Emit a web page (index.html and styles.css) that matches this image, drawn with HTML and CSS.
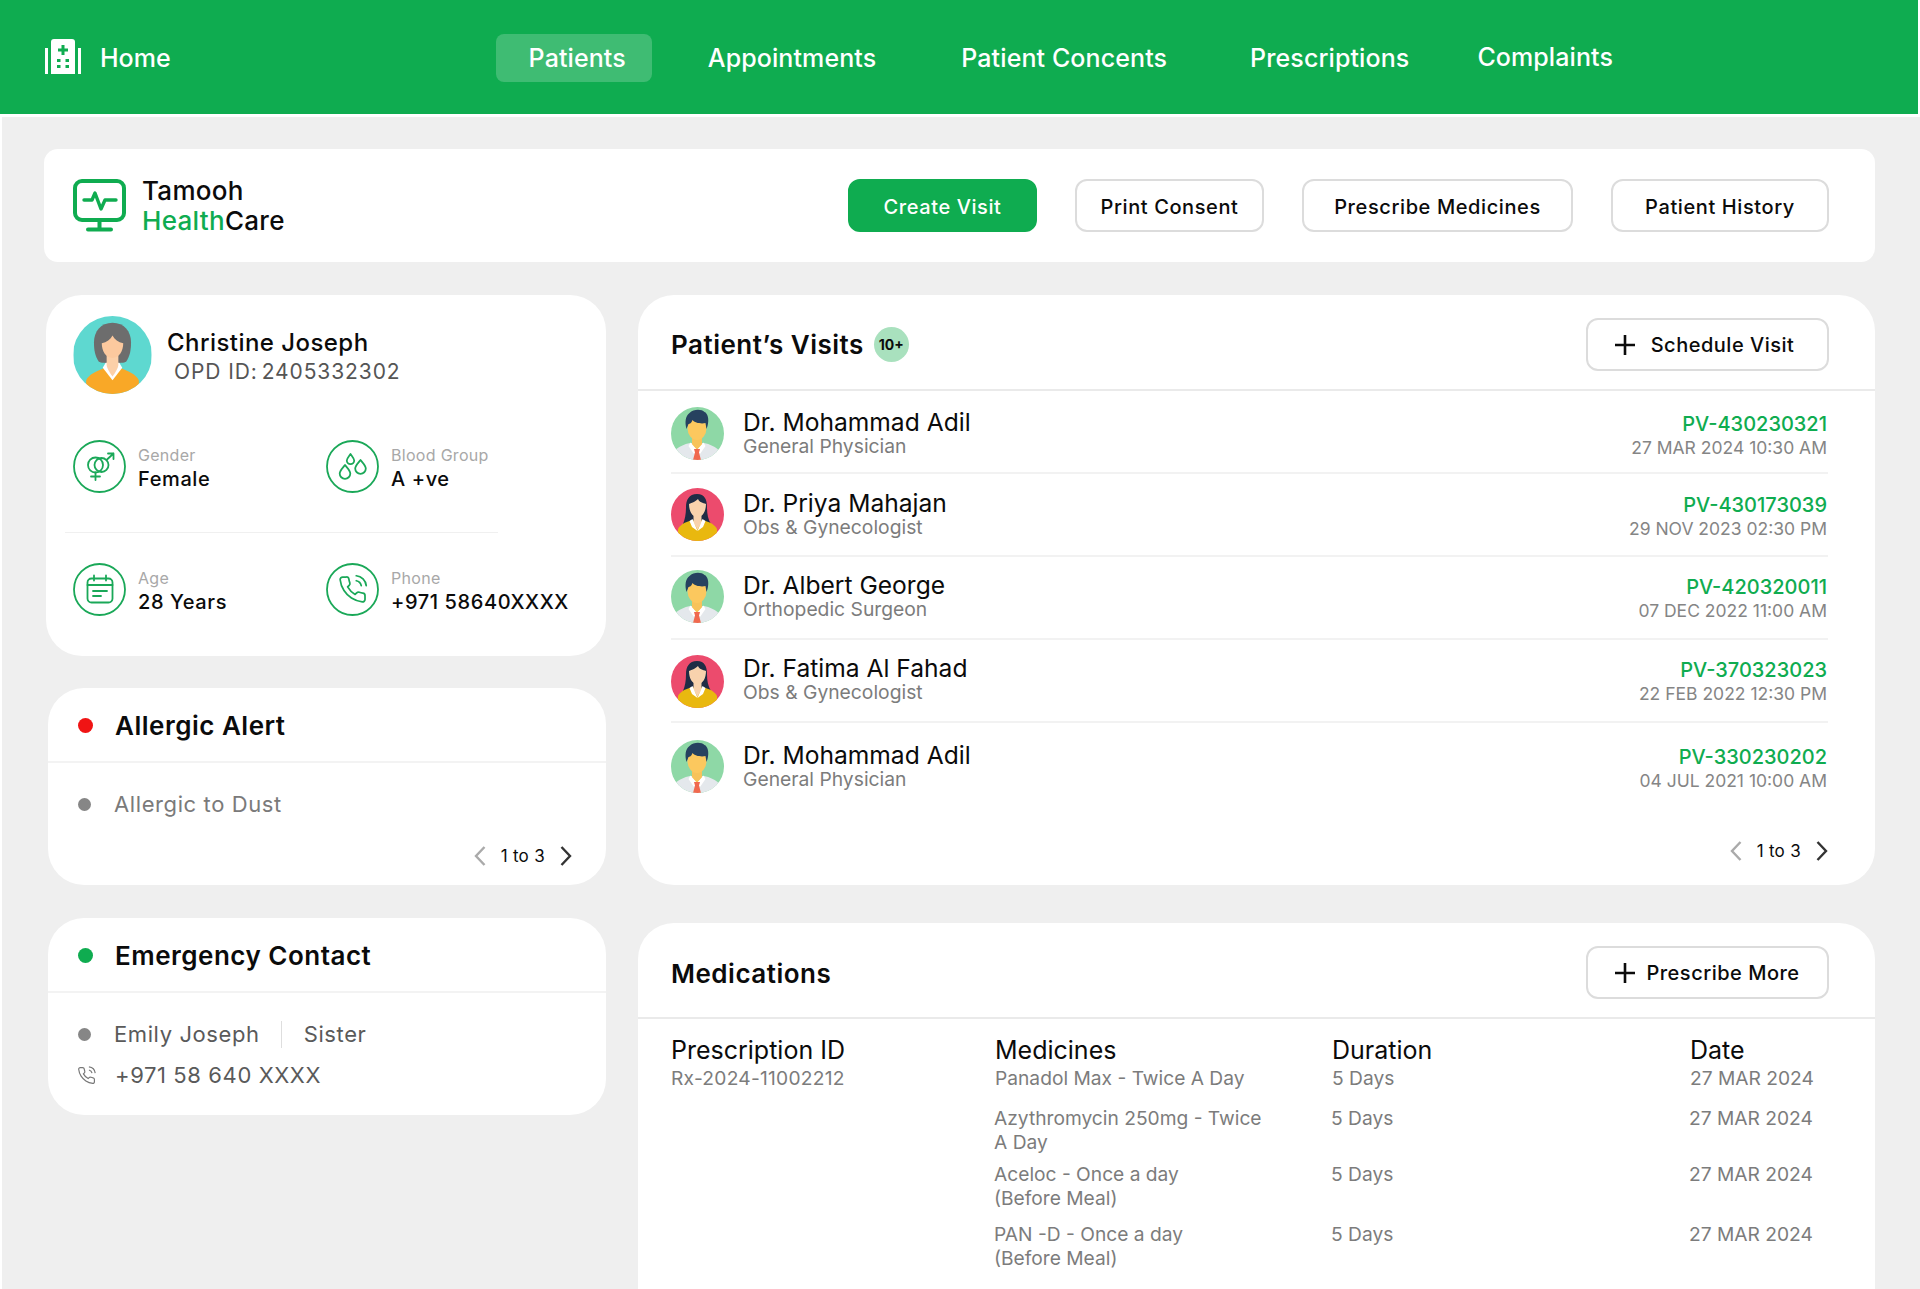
FILE: index.html
```html
<!DOCTYPE html>
<html lang="en">
<head>
    <meta charset="UTF-8">
    <title>Tamooh HealthCare - Patient</title>
    <link rel="stylesheet" href="styles.css">
</head>
<body>
    <!-- Shared avatars and icons -->
    <svg class="sprite" xmlns="http://www.w3.org/2000/svg">
        <symbol id="doctor-male" viewBox="0 0 53 53">
            <rect width="53" height="53" fill="#8ed8a6"/>
            <path d="M4 53v-9c2-4 10-7 15-8h14c5 1 13 4 15 8v9z" fill="#e4e8ec"/>
            <path d="M21 28h10v10l-5 5-5-5z" fill="#f7c35a"/>
            <path d="M19.500 35.500l6.500 7.500-3 4-5.500-8zM32.500 35.500l-6.500 7.500 3 4 5.500-8z" fill="#fff"/>
            <path d="M23 42h6l-1 3.500 2 7.500h-8l2-7.500z" fill="#f0694f"/>
            <ellipse cx="26" cy="21" rx="9.500" ry="12" fill="#fcc85e"/>
            <path d="M15.500 22c-2-7-1-13 3-16 4-4 12-4 15-1 3 1 5 7 3 14l-1 3-1-6c-4 1-11 0-13-3-1 3-3 4-4 4z" fill="#26415f"/>
        </symbol>
        <symbol id="doctor-female" viewBox="0 0 53 53">
            <rect width="53" height="53" fill="#ec4b6d"/>
            <path d="M26 6c-8 0-11 6-11 13 0 7-1 12-3 17h28c-3-5-4-10-4-17 0-7-2-13-10-13z" fill="#1f2c45"/>
            <path d="M7 53v-12c2-4 7-7 13-8.500h13c6 1.500 11 4.500 13 8.500v12z" fill="#e9b80f"/>
            <path d="M22.500 25h8v9l-4 8-4-8z" fill="#f8d2ad"/>
            <path d="M21.500 31l5 12-5.500-4-2.500-6zM31.500 31l-5 12 5.500-4 2.500-6z" fill="#fff"/>
            <path d="M18 16c3-1 7-3 9-5 1 3 5 4 8 5 0 7-3 13-8.500 13S18 23 18 16z" fill="#f8d2ad"/>
        </symbol>
        <symbol id="icon-phone" viewBox="0 0 24 24">
            <path d="M22 16.920v3a2 2 0 0 1-2.180 2 19.790 19.790 0 0 1-8.630-3.070 19.500 19.500 0 0 1-6-6 19.790 19.790 0 0 1-3.070-8.670A2 2 0 0 1 4.110 2h3a2 2 0 0 1 2 1.720 12.840 12.840 0 0 0 .7 2.810 2 2 0 0 1-.45 2.110L8.090 9.910a16 16 0 0 0 6 6l1.270-1.270a2 2 0 0 1 2.110-.45 12.840 12.840 0 0 0 2.810.7A2 2 0 0 1 22 16.920z"/>
            <path d="M15.050 5A5 5 0 0 1 19 8.950M15.050 1A9 9 0 0 1 23 8.940"/>
        </symbol>
        <symbol id="icon-plus" viewBox="0 0 20 20">
            <path d="M10 0v20M0 10h20"/>
        </symbol>
        <symbol id="chevron-left" viewBox="0 0 12 20">
            <path d="M10.500 1L2 10l8.500 9"/>
        </symbol>
        <symbol id="chevron-right" viewBox="0 0 12 20">
            <path d="M1.500 1L10 10l-8.500 9"/>
        </symbol>
    </svg>

    <header class="navbar">
        <a class="brand-home">
            <svg class="home-icon" viewBox="0 0 36 36">
                <path d="M6 3a3 3 0 0 1 3-3h18a3 3 0 0 1 3 3v32H6z" fill="#fff"/>
                <path d="M0 9h3v26H0zM33 9h3v26h-3z" fill="#fff"/>
                <path d="M16.500 6h3v3.500H23v3h-3.500V16h-3v-3.500H13v-3h3.500z" fill="#0fac50"/>
                <path d="M12 20h3.500v3H12zM20.500 20H24v3h-3.500zM12 26h3.500v3H12zM20.500 26H24v3h-3.500z" fill="#0fac50"/>
            </svg>
            <span>Home</span>
        </a>
        <nav class="nav-links">
            <a class="nav-link active">Patients</a>
            <a class="nav-link">Appointments</a>
            <a class="nav-link concents">Patient Concents</a>
            <a class="nav-link">Prescriptions</a>
            <a class="nav-link last">Complaints</a>
        </nav>
    </header>

    <main class="page">
        <section class="top-bar">
            <div class="logo">
                <svg class="logo-icon" viewBox="0 0 53 53">
                    <rect x="2" y="2" width="49" height="39" rx="7" fill="none" stroke="#0fac50" stroke-width="4"/>
                    <path d="M26.500 42v7M15 50.500h23" fill="none" stroke="#0fac50" stroke-width="4" stroke-linecap="round"/>
                    <path d="M11 21h8l3-7 6 16 4-9h11" fill="none" stroke="#0fac50" stroke-width="3.400" stroke-linecap="round" stroke-linejoin="round"/>
                </svg>
                <div class="logo-text">
                    <div>Tamooh</div>
                    <div><span class="green">Health</span>Care</div>
                </div>
            </div>
            <div class="top-actions">
                <button class="btn btn-primary create">Create Visit</button>
                <button class="btn consent">Print Consent</button>
                <button class="btn prescribe">Prescribe Medicines</button>
                <button class="btn history">Patient History</button>
            </div>
        </section>

        <div class="columns">
            <div class="left-col">
                <section class="card patient-card">
                    <div class="patient-head">
                        <svg class="patient-avatar" viewBox="0 0 80 80">
                            <rect width="80" height="80" fill="#5ed8d0"/>
                            <path d="M40 7c-12 0-19 9-19 20 0 8 1 14 5 20 3 2 25 2 28 0 4-6 5-12 5-20C59 16 52 7 40 7z" fill="#6d6d6d"/>
                            <path d="M13 80V66c2-6 12-10 19-13h16c7 3 17 7 19 13v14z" fill="#f9a827"/>
                            <path d="M30 53l10 13 10-13-3-5H33z" fill="#fff"/>
                            <path d="M34 38h12v12c0 3-3 8-6 12-3-4-6-9-6-12z" fill="#fcd0a8"/>
                            <path d="M29 28c5-1 9-4 11-8 2 4 6 7 11 8 0 8-4 15-11 15s-11-7-11-15z" fill="#fcc99e"/>
                        </svg>
                        <div>
                            <div class="patient-name">Christine Joseph</div>
                            <div class="patient-id">OPD ID:<span class="patient-number">2405332302</span></div>
                        </div>
                    </div>
                    <div class="info-row">
                        <div class="info-item">
                            <svg class="info-icon" viewBox="0 0 53 53">
                                <circle cx="26.500" cy="26.500" r="25.500"/>
                                <circle cx="22.500" cy="25" r="7.500"/>
                                <circle cx="28.500" cy="25" r="7"/>
                                <path d="M22.500 32.500V40M18 36.500h9M33.500 20l7-6.500M35 13.500h5.500V19"/>
                            </svg>
                            <div class="info-text">
                                <div class="info-label">Gender</div>
                                <div class="info-value">Female</div>
                            </div>
                        </div>
                        <div class="info-item">
                            <svg class="info-icon" viewBox="0 0 53 53">
                                <circle cx="26.500" cy="26.500" r="25.500"/>
                                <path d="M24.500 14c2 2.800 3.700 4.500 3.700 6.500a3.700 3.700 0 0 1-7.400 0c0-2 1.700-3.700 3.700-6.500z"/>
                                <path d="M19 25c2.800 3.500 5.300 5.700 5.300 8.500a5.300 5.300 0 0 1-10.600 0c0-2.800 2.500-5 5.300-8.500z"/>
                                <path d="M34.500 20c2.800 3.500 5.300 5.700 5.300 8.500a5.300 5.300 0 0 1-10.600 0c0-2.800 2.500-5 5.300-8.500z"/>
                            </svg>
                            <div class="info-text">
                                <div class="info-label">Blood Group</div>
                                <div class="info-value">A +ve</div>
                            </div>
                        </div>
                    </div>
                    <div class="info-divider"></div>
                    <div class="info-row">
                        <div class="info-item">
                            <svg class="info-icon" viewBox="0 0 53 53">
                                <circle cx="26.500" cy="26.500" r="25.500"/>
                                <rect x="14.500" y="15.500" width="25" height="24" rx="4"/>
                                <path d="M14.500 22h25M21 12.500v5M33 12.500v5M20 28h14M20 33h8"/>
                            </svg>
                            <div class="info-text">
                                <div class="info-label">Age</div>
                                <div class="info-value">28 Years</div>
                            </div>
                        </div>
                        <div class="info-item">
                            <svg class="info-icon" viewBox="0 0 53 53">
                                <circle cx="26.500" cy="26.500" r="25.500"/>
                                <use href="#icon-phone" x="11.500" y="11.500" width="30" height="30"/>
                            </svg>
                            <div class="info-text">
                                <div class="info-label">Phone</div>
                                <div class="info-value">+971 58640XXXX</div>
                            </div>
                        </div>
                    </div>
                </section>

                <section class="card side-card allergic-card">
                    <div class="side-head">
                        <span class="status-dot red"></span>
                        <h3>Allergic Alert</h3>
                    </div>
                    <div class="side-body">
                        <div class="side-line">
                            <span class="gray-dot"></span>
                            <span>Allergic to Dust</span>
                        </div>
                        <div class="pager">
                            <svg class="chevron off"><use href="#chevron-left"/></svg>
                            <span>1 to 3</span>
                            <svg class="chevron"><use href="#chevron-right"/></svg>
                        </div>
                    </div>
                </section>

                <section class="card side-card">
                    <div class="side-head">
                        <span class="status-dot green-dot"></span>
                        <h3>Emergency Contact</h3>
                    </div>
                    <div class="side-body">
                        <div class="side-line dark">
                            <span class="gray-dot"></span>
                            <span class="contact-name">Emily Joseph</span>
                            <span>Sister</span>
                        </div>
                        <div class="side-line dark phone-line">
                            <svg class="small-phone"><use href="#icon-phone"/></svg>
                            <span>+971 58 640 XXXX</span>
                        </div>
                    </div>
                </section>
            </div>

            <div class="right-col">
                <section class="card wide-card visits-card">
                    <div class="wide-head">
                        <div class="wide-title">
                            <h2>Patient’s Visits</h2>
                            <span class="count-badge">10+</span>
                        </div>
                        <button class="btn btn-add schedule">
                            <svg class="plus"><use href="#icon-plus"/></svg>
                            Schedule Visit
                        </button>
                    </div>
                    <div class="visit-list">
                        <div class="visit-row">
                            <svg class="doc-avatar"><use href="#doctor-male"/></svg>
                            <div class="doc-text">
                                <div class="doc-name">Dr. Mohammad Adil</div>
                                <div class="doc-role">General Physician</div>
                            </div>
                            <div class="visit-meta">
                                <div class="visit-id">PV-430230321</div>
                                <div class="visit-date">27 MAR 2024 10:30 AM</div>
                            </div>
                        </div>
                        <div class="visit-row">
                            <svg class="doc-avatar"><use href="#doctor-female"/></svg>
                            <div class="doc-text">
                                <div class="doc-name">Dr. Priya Mahajan</div>
                                <div class="doc-role">Obs &amp; Gynecologist</div>
                            </div>
                            <div class="visit-meta">
                                <div class="visit-id">PV-430173039</div>
                                <div class="visit-date">29 NOV 2023 02:30 PM</div>
                            </div>
                        </div>
                        <div class="visit-row">
                            <svg class="doc-avatar"><use href="#doctor-male"/></svg>
                            <div class="doc-text">
                                <div class="doc-name">Dr. Albert George</div>
                                <div class="doc-role">Orthopedic Surgeon</div>
                            </div>
                            <div class="visit-meta">
                                <div class="visit-id">PV-420320011</div>
                                <div class="visit-date">07 DEC 2022 11:00 AM</div>
                            </div>
                        </div>
                        <div class="visit-row">
                            <svg class="doc-avatar"><use href="#doctor-female"/></svg>
                            <div class="doc-text">
                                <div class="doc-name">Dr. Fatima Al Fahad</div>
                                <div class="doc-role">Obs &amp; Gynecologist</div>
                            </div>
                            <div class="visit-meta">
                                <div class="visit-id">PV-370323023</div>
                                <div class="visit-date">22 FEB 2022 12:30 PM</div>
                            </div>
                        </div>
                        <div class="visit-row">
                            <svg class="doc-avatar"><use href="#doctor-male"/></svg>
                            <div class="doc-text">
                                <div class="doc-name">Dr. Mohammad Adil</div>
                                <div class="doc-role">General Physician</div>
                            </div>
                            <div class="visit-meta">
                                <div class="visit-id">PV-330230202</div>
                                <div class="visit-date">04 JUL 2021 10:00 AM</div>
                            </div>
                        </div>
                    </div>
                    <div class="pager visits-pager">
                        <svg class="chevron off"><use href="#chevron-left"/></svg>
                        <span>1 to 3</span>
                        <svg class="chevron"><use href="#chevron-right"/></svg>
                    </div>
                </section>

                <section class="card wide-card meds-card">
                    <div class="wide-head">
                        <div class="wide-title">
                            <h2>Medications</h2>
                        </div>
                        <button class="btn btn-add prescribe-more">
                            <svg class="plus"><use href="#icon-plus"/></svg>
                            Prescribe More
                        </button>
                    </div>
                    <div class="med-table">
                        <div class="med-row med-first">
                            <div>
                                <div class="med-head">Prescription ID</div>
                                <span class="med-id">Rx-2024-11002212</span>
                            </div>
                            <div>
                                <div class="med-head">Medicines</div>
                                Panadol Max - Twice A Day
                            </div>
                            <div>
                                <div class="med-head">Duration</div>
                                5 Days
                            </div>
                            <div>
                                <div class="med-head">Date</div>
                                27 MAR 2024
                            </div>
                        </div>
                        <div class="med-row med-second">
                            <div></div>
                            <div class="med-name">Azythromycin 250mg - Twice A Day</div>
                            <div>5 Days</div>
                            <div>27 MAR 2024</div>
                        </div>
                        <div class="med-row med-third">
                            <div></div>
                            <div class="med-name">Aceloc - Once a day<br>(Before Meal)</div>
                            <div>5 Days</div>
                            <div>27 MAR 2024</div>
                        </div>
                        <div class="med-row med-fourth">
                            <div></div>
                            <div class="med-name">PAN -D - Once a day<br>(Before Meal)</div>
                            <div>5 Days</div>
                            <div>27 MAR 2024</div>
                        </div>
                    </div>
                </section>
            </div>
        </div>
    </main>
</body>
</html>
```
FILE: styles.css
```css
/* General styles */
* {
    box-sizing: border-box;
}

html, body {
    height: 100%;
}

body {
    margin: 0;
    background-color: #fff;
    font-family: Inter, "Liberation Sans", sans-serif;
    color: #0b0b0b;
    overflow: hidden;
    display: flex;
    flex-direction: column;
}

.sprite {
    display: none;
}

h2, h3 {
    margin: 0;
}

/* Top navigation */
.navbar {
    height: 114px;
    flex-shrink: 0;
    background-color: #0fac50;
    color: #fff;
    display: flex;
    align-items: center;
    padding: 2px 0 0 45px;
    margin-right: 2px;
}

.brand-home {
    display: flex;
    align-items: center;
    gap: 19px;
    font-size: 25px;
    font-weight: 500;
}

.home-icon {
    width: 36px;
    height: 36px;
    margin-bottom: 2px;
}

.nav-links {
    display: flex;
    align-items: center;
    margin-left: 325px;
    font-size: 25px;
    font-weight: 500;
    letter-spacing: 0.1px;
}

.nav-link {
    padding: 0 30px;
    height: 48px;
    line-height: 48px;
    margin-right: 25px;
}

.nav-link.active {
    padding: 0 26px 0 33px;
    margin-right: 26px;
    background-color: rgba(255, 255, 255, 0.2);
    border-radius: 8px;
}

.nav-link.concents {
    margin-right: 23px;
}

.nav-link.last {
    margin-left: -17px;
    margin-bottom: 3px;
}

/* Page */
.page {
    flex: 1;
    min-height: 0;
    margin: 3px 0 0 2px;
    padding: 32px 45px 0 42px;
    background-color: #efefef;
    display: flex;
    flex-direction: column;
}

.top-bar {
    height: 113px;
    flex-shrink: 0;
    background-color: #fff;
    border-radius: 14px;
    display: flex;
    align-items: center;
    padding: 0 46px 0 29px;
}

.logo {
    display: flex;
    align-items: center;
    gap: 16px;
}

.logo-icon {
    width: 53px;
    height: 53px;
}

.logo-text {
    font-size: 26px;
    line-height: 30px;
    font-weight: 500;
    letter-spacing: 0.3px;
}

.green {
    color: #0fac50;
}

.top-actions {
    margin-left: auto;
    display: flex;
    gap: 38px;
}

.btn {
    height: 53px;
    border: 2px solid #dcdcdc;
    border-radius: 12px;
    background-color: #fff;
    color: #0b0b0b;
    font-family: inherit;
    font-size: 20px;
    font-weight: 500;
    letter-spacing: 0.6px;
    padding: 2px 0 0;
}

.btn-primary {
    background-color: #0fac50;
    border-color: #0fac50;
    color: #fff;
}

.create { width: 189px; }
.consent { width: 189px; }
.prescribe { width: 271px; }
.history { width: 218px; }

.btn-add {
    width: 243px;
    display: flex;
    align-items: center;
    justify-content: center;
    letter-spacing: 0.5px;
    padding: 0;
}

.plus {
    width: 20px;
    height: 20px;
    fill: none;
    stroke: #0b0b0b;
    stroke-width: 2.600;
}

.schedule {
    padding-right: 6px;
}

.schedule .plus { margin-right: 16px; }
.prescribe-more .plus { margin-right: 11px; }

/* Columns */
.columns {
    flex: 1;
    min-height: 0;
    display: flex;
    gap: 32px;
    margin-top: 33px;
}

.left-col {
    width: 562px;
    flex-shrink: 0;
    padding-left: 4px;
}

.right-col {
    flex: 1;
    min-width: 0;
    display: flex;
    flex-direction: column;
}

.card {
    background-color: #fff;
    border-radius: 36px;
}

/* Patient card */
.patient-card {
    height: 361px;
    margin-left: -2px;
    padding: 21px 27px 0;
}

.patient-head {
    display: flex;
    align-items: center;
    gap: 15px;
}

.patient-avatar {
    width: 79px;
    height: 78px;
    border-radius: 50%;
}

.patient-name {
    font-size: 24px;
    font-weight: 500;
    letter-spacing: 0.45px;
    padding-top: 1px;
    margin-bottom: 2px;
}

.patient-id {
    font-size: 21px;
    color: #555;
    letter-spacing: 0.9px;
    margin-left: 7px;
}

.patient-number {
    margin-left: 4px;
}

.info-row {
    display: flex;
    margin-top: 46px;
}

.info-divider + .info-row {
    margin-top: 30px;
}

.info-item {
    width: 253px;
    display: flex;
    align-items: center;
    gap: 12px;
}

.info-icon {
    width: 53px;
    height: 53px;
    flex-shrink: 0;
    fill: none;
    stroke: #1aa858;
    stroke-width: 1.800;
    stroke-linecap: round;
    stroke-linejoin: round;
}

.info-icon use {
    stroke-width: 1.400;
}

.info-text {
    padding-top: 2px;
}

.info-label {
    font-size: 16px;
    color: #a8a8a8;
    letter-spacing: 0.3px;
}

.info-value {
    font-size: 20px;
    font-weight: 500;
    letter-spacing: 0.6px;
    margin-top: 2px;
}

.info-divider {
    height: 1px;
    width: 433px;
    margin: 39px 0 0 -8px;
    background-color: #f0f0f0;
}

/* Alert and contact cards */
.side-card {
    height: 197px;
}

.allergic-card {
    margin: 32px 0 33px;
}

.side-head {
    height: 75px;
    border-bottom: 2px solid #f3f3f3;
    display: flex;
    align-items: center;
    padding: 2px 0 0 30px;
    gap: 22px;
}

.status-dot {
    width: 15px;
    height: 15px;
    border-radius: 50%;
}

.red {
    background-color: #f01414;
}

.green-dot {
    background-color: #0fac50;
}

.side-head h3 {
    font-size: 26px;
    font-weight: 600;
    letter-spacing: 0.5px;
}

.side-body {
    padding: 28px 30px 0;
}

.side-line {
    display: flex;
    align-items: center;
    font-size: 22px;
    line-height: 27px;
    color: #7a7a7a;
    letter-spacing: 0.6px;
}

.side-line.dark {
    color: #5a5a5a;
}

.gray-dot {
    width: 13px;
    height: 13px;
    border-radius: 50%;
    background-color: #868686;
    margin-right: 23px;
}

.contact-name {
    padding-right: 21px;
    margin-right: 22px;
    border-right: 1px solid #dedede;
}

.phone-line {
    margin-top: 14px;
}

.small-phone {
    width: 19px;
    height: 19px;
    margin: 0 19px 0 -1px;
    fill: none;
    stroke: #777;
    stroke-width: 1.500;
}

.pager {
    display: flex;
    align-items: center;
    justify-content: flex-end;
    gap: 15px;
    font-size: 17px;
    letter-spacing: 0.3px;
    margin: 28px 4px 0 0;
}

.chevron {
    width: 12px;
    height: 20px;
    fill: none;
    stroke: #333;
    stroke-width: 2.400;
}

.chevron.off {
    stroke: #aaa;
}

/* Visits and medications */
.wide-card {
    width: 100%;
}

.visits-card {
    height: 590px;
    flex-shrink: 0;
    margin-bottom: 38px;
}

.meds-card {
    flex: 1;
    min-height: 0;
    border-radius: 36px 36px 0 0;
}

.meds-card h2 {
    margin-top: 2px;
}

.wide-head {
    height: 96px;
    border-bottom: 2px solid #eaeaea;
    display: flex;
    align-items: center;
    justify-content: space-between;
    padding: 5px 46px 0 33px;
}

.wide-title {
    display: flex;
    align-items: center;
    gap: 10px;
}

.wide-title h2 {
    font-size: 26px;
    font-weight: 600;
    letter-spacing: 0.5px;
}

.count-badge {
    width: 35px;
    height: 35px;
    border-radius: 50%;
    background-color: #a9e1be;
    font-size: 14px;
    font-weight: 700;
    display: flex;
    align-items: center;
    justify-content: center;
}

.visit-list {
    padding: 0 47px 0 33px;
}

.visit-row {
    height: 83px;
    display: flex;
    align-items: center;
    border-bottom: 2px solid #f2f2f2;
    padding-bottom: 2px;
}

.visit-row:nth-child(1),
.visit-row:nth-child(5) {
    padding-top: 5px;
}

.visit-row:nth-child(2) {
    padding-top: 2px;
}

.visit-row:nth-child(4) {
    padding-top: 3px;
}

.visit-row:nth-child(4) .doc-text {
    margin-bottom: 5px;
}

.visit-row:nth-child(4) .visit-meta {
    margin-top: 1px;
}

.visit-row:last-child {
    border-bottom: none;
}

.doc-avatar {
    width: 53px;
    height: 53px;
    border-radius: 50%;
    margin-right: 19px;
}

.doc-text {
    margin-bottom: 2px;
}

.doc-name {
    font-size: 24.600px;
    line-height: 27px;
}

.doc-role {
    font-size: 19.300px;
    line-height: 20px;
    color: #7c7c7c;
}

.visit-meta {
    margin: 5px 1px 0 auto;
    text-align: right;
}

.visit-id {
    font-size: 20px;
    line-height: 23px;
    font-weight: 500;
    color: #0fac50;
}

.visit-date {
    font-size: 17.500px;
    line-height: 23px;
    color: #858585;
}

.visits-pager {
    margin: 35px 47px 0 0;
}

.med-table {
    padding: 16px 46px 0 33px;
    font-size: 19.200px;
    line-height: 24.500px;
    color: #7c7c7c;
}

.med-row {
    display: grid;
    grid-template-columns: 324px 337px 358px 1fr;
}

.med-head {
    font-size: 25px;
    line-height: 30px;
    color: #0b0b0b;
    margin-bottom: 1px;
}

.med-id {
    letter-spacing: 0.25px;
}

.med-name {
    width: 280px;
}

.med-second,
.med-third,
.med-fourth {
    margin-left: -1px;
}

.med-second { margin-top: 15px; }
.med-third { margin-top: 7px; }
.med-fourth { margin-top: 11px; }
```
